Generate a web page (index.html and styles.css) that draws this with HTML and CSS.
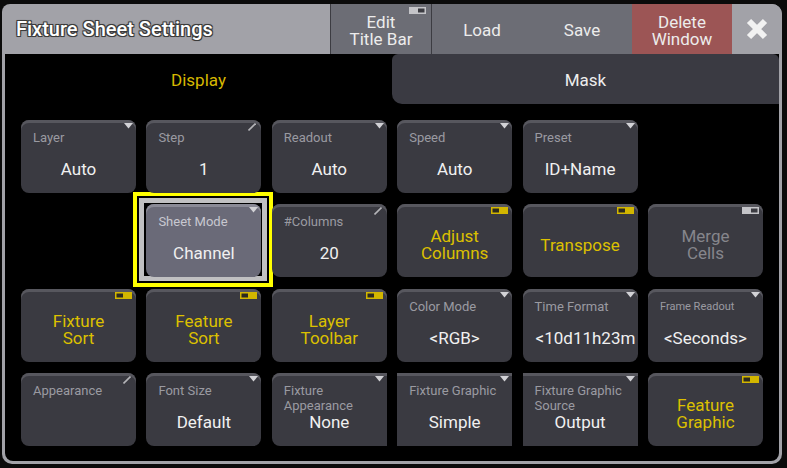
FILE: index.html
```html
<!DOCTYPE html>
<html>
<head>
<meta charset="utf-8">
<title>Fixture Sheet Settings</title>
<link rel="stylesheet" href="styles.css">
</head>
<body>
<div class="window">
  <div class="titlebar">
    <div class="title">Fixture Sheet Settings</div>
    <div class="tb-btn edit">Edit<br>Title Bar
      <svg class="ico tg" width="17" height="7" viewBox="0 0 17 7"><rect width="17" height="7" fill="#c4c4c8"/><rect x="9" y="1.5" width="6.5" height="4" fill="#3c3c42"/></svg>
    </div>
    <div class="tb-btn">Load</div>
    <div class="tb-btn">Save</div>
    <div class="tb-btn delete">Delete<br>Window</div>
    <div class="tb-btn close">
      <svg width="22" height="22" viewBox="0 0 22 22"><path d="M3 3L19 19M19 3L3 19" stroke="#f2f2f2" stroke-width="6"/></svg>
    </div>
  </div>
  <div class="content">
    <div class="tabs">
      <div class="tab active">Display</div>
      <div class="tab mask">Mask</div>
    </div>
    <div class="grid">
      <!-- row 1 -->
      <div class="btn"><div class="lbl">Layer</div><div class="val">Auto</div>
        <svg class="ico tri" width="9" height="6" viewBox="0 0 9 6"><path d="M0 0H9L4.5 5.5Z"/></svg></div>
      <div class="btn"><div class="lbl">Step</div><div class="val">1</div>
        <svg class="ico ed" width="8" height="8" viewBox="0 0 8 8"><path d="M0.5 7.5L7.5 0.5"/></svg></div>
      <div class="btn"><div class="lbl">Readout</div><div class="val">Auto</div>
        <svg class="ico tri" width="9" height="6" viewBox="0 0 9 6"><path d="M0 0H9L4.5 5.5Z"/></svg></div>
      <div class="btn"><div class="lbl">Speed</div><div class="val">Auto</div>
        <svg class="ico tri" width="9" height="6" viewBox="0 0 9 6"><path d="M0 0H9L4.5 5.5Z"/></svg></div>
      <div class="btn"><div class="lbl">Preset</div><div class="val">ID+Name</div>
        <svg class="ico tri" width="9" height="6" viewBox="0 0 9 6"><path d="M0 0H9L4.5 5.5Z"/></svg></div>
      <div class="empty"></div>
      <!-- row 2 -->
      <div class="empty"></div>
      <div class="btn sel"><div class="lbl">Sheet Mode</div><div class="val">Channel</div>
        <svg class="ico tri" width="9" height="6" viewBox="0 0 9 6"><path d="M0 0H9L4.5 5.5Z"/></svg></div>
      <div class="btn"><div class="lbl">#Columns</div><div class="val">20</div>
        <svg class="ico ed" width="8" height="8" viewBox="0 0 8 8"><path d="M0.5 7.5L7.5 0.5"/></svg></div>
      <div class="btn tog"><span>Adjust</span><span>Columns</span>
        <svg class="ico tg" width="17" height="7" viewBox="0 0 17 7"><rect width="17" height="7" fill="#d2b600"/><rect x="1.5" y="1.5" width="6.5" height="4" fill="#2c2a1e"/></svg></div>
      <div class="btn tog"><span>Transpose</span>
        <svg class="ico tg" width="17" height="7" viewBox="0 0 17 7"><rect width="17" height="7" fill="#d2b600"/><rect x="1.5" y="1.5" width="6.5" height="4" fill="#2c2a1e"/></svg></div>
      <div class="btn tog off"><span>Merge</span><span>Cells</span>
        <svg class="ico tg" width="17" height="7" viewBox="0 0 17 7"><rect width="17" height="7" fill="#c4c4c8"/><rect x="9" y="1.5" width="6.5" height="4" fill="#3c3c42"/></svg></div>
      <!-- row 3 -->
      <div class="btn tog"><span>Fixture</span><span>Sort</span>
        <svg class="ico tg" width="17" height="7" viewBox="0 0 17 7"><rect width="17" height="7" fill="#d2b600"/><rect x="1.5" y="1.5" width="6.5" height="4" fill="#2c2a1e"/></svg></div>
      <div class="btn tog"><span>Feature</span><span>Sort</span>
        <svg class="ico tg" width="17" height="7" viewBox="0 0 17 7"><rect width="17" height="7" fill="#d2b600"/><rect x="1.5" y="1.5" width="6.5" height="4" fill="#2c2a1e"/></svg></div>
      <div class="btn tog"><span>Layer</span><span>Toolbar</span>
        <svg class="ico tg" width="17" height="7" viewBox="0 0 17 7"><rect width="17" height="7" fill="#d2b600"/><rect x="1.5" y="1.5" width="6.5" height="4" fill="#2c2a1e"/></svg></div>
      <div class="btn"><div class="lbl">Color Mode</div><div class="val">&lt;RGB&gt;</div>
        <svg class="ico tri" width="9" height="6" viewBox="0 0 9 6"><path d="M0 0H9L4.5 5.5Z"/></svg></div>
      <div class="btn"><div class="lbl">Time Format</div><div class="val left">&lt;10d11h23m</div>
        <svg class="ico tri" width="9" height="6" viewBox="0 0 9 6"><path d="M0 0H9L4.5 5.5Z"/></svg></div>
      <div class="btn"><div class="lbl small">Frame Readout</div><div class="val">&lt;Seconds&gt;</div>
        <svg class="ico tri" width="9" height="6" viewBox="0 0 9 6"><path d="M0 0H9L4.5 5.5Z"/></svg></div>
      <!-- row 4 -->
      <div class="btn"><div class="lbl">Appearance</div><div class="val"></div>
        <svg class="ico ed" width="8" height="8" viewBox="0 0 8 8"><path d="M0.5 7.5L7.5 0.5"/></svg></div>
      <div class="btn"><div class="lbl">Font Size</div><div class="val">Default</div>
        <svg class="ico tri" width="9" height="6" viewBox="0 0 9 6"><path d="M0 0H9L4.5 5.5Z"/></svg></div>
      <div class="btn sq-r"><div class="lbl two"><span>Fixture</span><span>Appearance</span></div><div class="val">None</div>
        <svg class="ico tri" width="9" height="6" viewBox="0 0 9 6"><path d="M0 0H9L4.5 5.5Z"/></svg></div>
      <div class="btn sq"><div class="lbl">Fixture Graphic</div><div class="val">Simple</div>
        <svg class="ico tri" width="9" height="6" viewBox="0 0 9 6"><path d="M0 0H9L4.5 5.5Z"/></svg></div>
      <div class="btn sq"><div class="lbl two"><span>Fixture Graphic</span><span>Source</span></div><div class="val">Output</div>
        <svg class="ico tri" width="9" height="6" viewBox="0 0 9 6"><path d="M0 0H9L4.5 5.5Z"/></svg></div>
      <div class="btn tog"><span>Feature</span><span>Graphic</span>
        <svg class="ico tg" width="17" height="7" viewBox="0 0 17 7"><rect width="17" height="7" fill="#d2b600"/><rect x="1.5" y="1.5" width="6.5" height="4" fill="#2c2a1e"/></svg></div>
    </div>
  </div>
</div>
</body>
</html>
```

FILE: styles.css
```css
* { box-sizing: border-box; }
html, body { margin: 0; padding: 0; }
body {
  width: 787px;
  height: 468px;
  overflow: hidden;
  background: #0b0b0b;
  font-family: Roboto, "Noto Sans", "Liberation Sans", sans-serif;
  padding: 4px 0 0 2px;
}
.window {
  width: 780px;
  height: 460px;
  background: #a2a2a8;
  border-radius: 8px 10px 10px 10px;
  overflow: hidden;
  display: flex;
  flex-direction: column;
  padding: 0 3px 3px 3px;
}
.titlebar {
  height: 50px;
  margin: 0 -3px;
  display: flex;
  flex-shrink: 0;
}
.title {
  flex: 1;
  display: flex;
  align-items: center;
  padding-left: 14px;
  padding-bottom: 1px;
  font-size: 20px;
  font-weight: 500;
  color: #ffffff;
  text-shadow: -1px -1px 0 #3a3a3a, 1px -1px 0 #3a3a3a, -1px 1px 0 #3a3a3a, 1px 1px 0 #3a3a3a, 0 0 2px #2a2a2a;
}
.tb-btn {
  position: relative;
  width: 100px;
  display: flex;
  align-items: center;
  justify-content: center;
  text-align: center;
  background: #6c6d75;
  color: #ececec;
  font-size: 17px;
  line-height: 17px;
  padding-top: 3px;
}
.tb-btn.edit {
  width: 102px;
  border-left: 1px solid #3c3c42;
  border-right: 1px solid #3c3c42;
}
.tb-btn.delete { background: #9c5555; }
.tb-btn.close { width: 50px; background: #a2a2a8; padding-top: 0; }
.tb-btn .ico.tg { top: 3px; right: 5px; }

.content {
  flex: 1;
  background: #000;
  border-radius: 0 0 8px 8px;
  display: flex;
  flex-direction: column;
}
.tabs {
  height: 50px;
  display: flex;
}
.tab {
  flex: 1;
  display: flex;
  align-items: center;
  justify-content: center;
  font-size: 17px;
  padding-top: 1px;
}
.tab.active { color: #d6b800; }
.tab.mask {
  background: #3a3a42;
  color: #ededed;
  border-radius: 6px 6px 0 10px;
}
.grid {
  position: relative;
  z-index: 0;
  padding: 16px 0 0 16px;
  display: grid;
  grid-template-columns: repeat(6, 115px);
  grid-template-rows: repeat(4, 73px);
  column-gap: 10.4px;
  row-gap: 11.3px;
}
.btn {
  position: relative;
  background: #3a3a41;
  border-radius: 8px;
  box-shadow: inset 0 3px 0 #57575e;
  display: flex;
  flex-direction: column;
  padding-top: 10px;
}
.btn.sq { border-radius: 0; }
.btn.sq-r { border-radius: 8px 0 0 8px; }
.lbl {
  height: 29px;
  padding: 0 12px;
  font-size: 13px;
  line-height: 15px;
  color: #9a9aa1;
  white-space: nowrap;
}
.lbl.two { display: flex; flex-direction: column; }
.lbl.small { font-size: 11px; }
.val {
  height: 20px;
  line-height: 20px;
  font-size: 17px;
  color: #f0f0f0;
  text-align: center;
  white-space: nowrap;
}
.val.left {
  text-align: left;
  padding-left: 13px;
}
.btn.tog {
  justify-content: center;
  align-items: center;
  text-align: center;
  padding-top: 9px;
  font-size: 17px;
  line-height: 17px;
  color: #dcc000;
}
.btn.tog span { display: block; height: 17px; }
.btn.tog.off { color: #86868c; }

.btn.sel {
  background: #6a6a78;
  box-shadow: inset 0 3px 0 #8a8a96;
}
.btn.sel .lbl { color: #c8c8d0; }
.btn.sel::before {
  content: "";
  position: absolute;
  left: -13px;
  right: -12px;
  top: -12px;
  bottom: -10px;
  border: 4px solid #ffff00;
  background: #000;
  box-shadow: inset 0 0 0 2px #000, inset 0 0 0 7px #c0c0c2;
  z-index: -1;
}

.ico { position: absolute; display: block; }
.ico.tri { top: 3px; right: 3px; }
.ico.tri path { fill: #d2d2d6; }
.ico.ed { top: 3px; right: 5px; }
.ico.ed path { stroke: #b4b4b8; stroke-width: 1.6; fill: none; }
.ico.tg { top: 3px; right: 4px; }
```
